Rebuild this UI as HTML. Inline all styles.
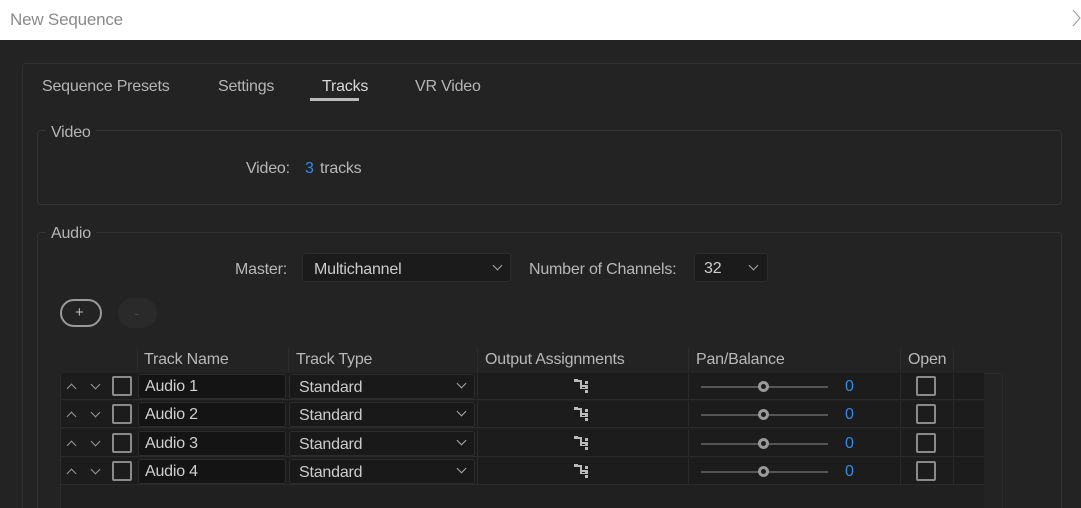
<!DOCTYPE html>
<html style="width:1081px;height:508px;overflow:hidden"><head><style>
*{margin:0;padding:0;box-sizing:border-box}
body{width:1081px;height:508px;overflow:hidden;background:#232323;font-family:"Liberation Sans","DejaVu Sans",sans-serif;color:#b8b8b8;position:relative}
.a{position:absolute}
.t{font-size:16px;white-space:nowrap;letter-spacing:-0.2px}
.bx{border:1px solid #333;border-radius:4px}
.inp{background:#161616;border:1px solid #2c2c2c;border-radius:3px}
.chev{position:absolute;width:7px;height:7px;border-right:1px solid #aaa;border-bottom:1px solid #aaa;transform:rotate(45deg)}
.up{position:absolute;width:7px;height:7px;border-left:1px solid #999;border-top:1px solid #999;transform:rotate(45deg)}
.dn{position:absolute;width:7px;height:7px;border-right:1px solid #999;border-bottom:1px solid #999;transform:rotate(45deg)}
.cb{position:absolute;width:20px;height:20px;border:2px solid #8a8a8a;border-radius:2px}
.blue{color:#2d8ceb}
</style></head><body>
<div class="a" style="left:0;top:0;width:1081px;height:40px;background:#fff"></div>
<div class="a t" style="left:10px;top:10px;color:#8a8a8a;font-size:17px">New Sequence</div>
<svg class="a" style="left:1072px;top:9px" width="10" height="18"><path d="M1 1 L8 9 L1 17" fill="none" stroke="#999" stroke-width="1"/></svg>

<div class="a" style="left:22px;top:63px;width:1070px;height:460px;border:1px solid #2e2e2e;border-radius:4px"></div>
<div class="a t" style="left:42px;top:78px;color:#b5b5b5">Sequence Presets</div>
<div class="a t" style="left:218px;top:78px;color:#b5b5b5">Settings</div>
<div class="a t" style="left:322px;top:78px;color:#d8d8d8">Tracks</div>
<div class="a" style="left:310px;top:98px;width:49px;height:3px;background:#bbb"></div>
<div class="a t" style="left:415px;top:78px;color:#b5b5b5">VR Video</div>

<div class="a bx" style="left:37px;top:130px;width:1025px;height:75px"></div>
<div class="a t" style="left:46px;top:124px;background:#232323;padding:0 5px;color:#b5b5b5">Video</div>
<div class="a t" style="left:246px;top:160px">Video:</div>
<div class="a t blue" style="left:305px;top:160px">3</div>
<div class="a t" style="left:320px;top:160px">tracks</div>

<div class="a bx" style="left:37px;top:232px;width:1025px;height:300px"></div>
<div class="a t" style="left:46px;top:225px;background:#232323;padding:0 5px;color:#b5b5b5">Audio</div>
<div class="a t" style="left:235px;top:261px">Master:</div>
<div class="a inp" style="left:302px;top:253px;width:209px;height:29px;background:#1b1b1b"></div>
<div class="a t" style="left:314px;top:261px;color:#ccc">Multichannel</div>
<div class="chev" style="left:494px;top:262px"></div>
<div class="a t" style="left:529px;top:261px">Number of Channels:</div>
<div class="a inp" style="left:694px;top:253px;width:74px;height:29px;background:#1b1b1b"></div>
<div class="a t" style="left:704px;top:260px;color:#ccc">32</div>
<div class="chev" style="left:750px;top:262px"></div>

<div class="a" style="left:60px;top:299px;width:42px;height:28px;border:2px solid #9a9a9a;border-radius:14px"></div>
<div class="a t" style="left:75px;top:304px;color:#bbb;font-size:15px">+</div>
<div class="a" style="left:118px;top:298px;width:39px;height:30px;background:#2a2a2a;border-radius:15px"></div>
<div class="a" style="left:135px;top:314px;width:4px;height:1px;background:#444"></div>

<div class="a t" style="left:144px;top:351px">Track Name</div>
<div class="a t" style="left:296px;top:351px">Track Type</div>
<div class="a t" style="left:485px;top:351px">Output Assignments</div>
<div class="a t" style="left:696px;top:351px">Pan/Balance</div>
<div class="a t" style="left:908px;top:351px">Open</div>
<div class="a" style="left:137px;top:348px;width:1px;height:24px;background:#2c2c2c"></div>
<div class="a" style="left:288px;top:348px;width:1px;height:24px;background:#2c2c2c"></div>
<div class="a" style="left:477px;top:348px;width:1px;height:24px;background:#2c2c2c"></div>
<div class="a" style="left:688px;top:348px;width:1px;height:24px;background:#2c2c2c"></div>
<div class="a" style="left:900px;top:348px;width:1px;height:24px;background:#2c2c2c"></div>
<div class="a" style="left:953px;top:348px;width:1px;height:24px;background:#2c2c2c"></div>

<div class="a" style="left:60px;top:373px;width:943px;height:150px;border:1px solid #2c2c2c;border-radius:3px;background:#202020"></div>
<div class="a" style="left:984px;top:374px;width:18px;height:140px;background:#232323"></div>

<div id="rows"></div>
<script>
var ys=[373,401,430,458],h='';
for(var i=0;i<4;i++){var y=ys[i];
h+='<div class="a" style="left:61px;top:'+y+'px;width:923px;height:27px;background:#1c1c1c;border-bottom:1px solid #2a2a2a"></div>';
h+='<div class="up" style="left:68px;top:'+(y+12)+'px"></div><div class="dn" style="left:92px;top:'+(y+8)+'px"></div>';
h+='<div class="cb" style="left:112px;top:'+(y+3)+'px"></div>';
h+='<div class="a inp" style="left:138px;top:'+(y+1)+'px;width:148px;height:25px;background:#141414"></div>';
h+='<div class="a t" style="left:145px;top:'+(y+5)+'px;color:#d0d0d0">Audio '+(i+1)+'</div>';
h+='<div class="a inp" style="left:289px;top:'+(y+1)+'px;width:186px;height:25px;background:#191919"></div>';
h+='<div class="a t" style="left:299px;top:'+(y+6)+'px;color:#ccc">Standard</div>';
h+='<div class="chev" style="left:458px;top:'+(y+7)+'px"></div>';
h+='<div class="a" style="left:477px;top:'+y+'px;width:1px;height:27px;background:#2a2a2a"></div>';
h+='<div class="a" style="left:688px;top:'+y+'px;width:1px;height:27px;background:#2a2a2a"></div>';
h+='<div class="a" style="left:900px;top:'+y+'px;width:1px;height:27px;background:#2a2a2a"></div>';
h+='<div class="a" style="left:953px;top:'+y+'px;width:1px;height:27px;background:#2a2a2a"></div>';
h+='<svg class="a" style="left:573px;top:'+(y+6)+'px" width="20" height="18"><g fill="#bbb"><rect x="1" y="0" width="4" height="3"/><rect x="5" y="1" width="4" height="2"/><rect x="7" y="3" width="2" height="7"/><rect x="9" y="6" width="5" height="2"/><rect x="12" y="2" width="3" height="3"/><rect x="12" y="6" width="3" height="4"/><rect x="12" y="11" width="3" height="3"/><rect x="7" y="9" width="5" height="1"/></g></svg>';
h+='<div class="a" style="left:701px;top:'+(y+13)+'px;width:127px;height:2px;background:#555"></div>';
h+='<div class="a" style="left:758px;top:'+(y+8)+'px;width:11px;height:11px;border-radius:50%;background:#1c1c1c;border:3px solid #999"></div>';
h+='<div class="a t blue" style="left:845px;top:'+(y+5)+'px">0</div>';
h+='<div class="cb" style="left:916px;top:'+(y+3)+'px"></div>';
}
document.getElementById('rows').innerHTML=h;
</script>
</body></html>
